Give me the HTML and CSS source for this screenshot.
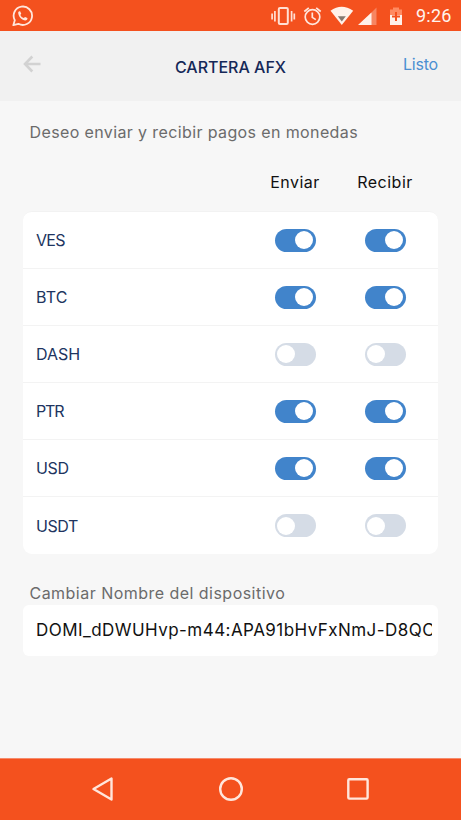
FILE: index.html
```
<!DOCTYPE html>
<html lang="es">
<head>
<meta charset="utf-8">
<meta name="viewport" content="width=device-width, initial-scale=1">
<title>Cartera AFX</title>
<link rel="stylesheet" href="styles.css">
</head>
<body>
<div class="screen">
  <div class="status">
    <svg class="whatsapp" width="22" height="22" viewBox="0 0 22 22" fill="none"><path d="M1.3 20.2 2.8 15.2A9.2 9.2 0 1 1 6.4 18.8Z" stroke="#ffe6dc" stroke-width="1.8" stroke-linejoin="round"/><path d="M6.2 7.3C6.7 6.3 7.5 5.9 8.1 6.3L9.2 8.5C9.3 9 8.5 9.6 8.4 9.9 8.9 11.3 10.2 12.5 11.7 13 12.3 12.8 12.6 11.9 13.1 11.9L15.4 13C15.8 14.3 14.6 15.4 13.3 15.6 10.2 15.6 6 11.4 6.2 7.3Z" fill="#ffe6dc"/></svg>
    <svg class="tray" width="134" height="20" viewBox="0 0 134 20" fill="none">
      <g stroke="#ffe0d4" stroke-width="1.7"><rect x="7.8" y="1.9" width="9" height="16" rx="1.2" stroke-width="2"/><path d="M1.1 7.5v6M3.9 5v10.5M20.6 5v10.5M23.3 7.5v6"/></g>
      <g stroke="#ffe6dc" stroke-width="1.7"><circle cx="41.5" cy="11" r="7.3"/><path d="M33.3 5.5 37.8 1.9M49.7 5.500 45.200 1.900M41.300 6.500v4.900l3.500 2.200"/></g>
      <path d="M59.500 4.800Q70.500-3.300 82.200 4.800L70.800 19Z" fill="#fff1e9"/><path d="M66.800 10.200H74.800L70.800 15.600Z" fill="#85776e"/>
      <path d="M105.500 1.500V19H88Z" fill="#fff" opacity=".3"/><path d="M100.500 6.500V19H87Z" fill="#fff1e9"/>
      <path d="M119 3.500h3V1.500h6v2h3V10h-12Z" fill="#ff8a61"/><path d="M119 9h12v10h-12Z" fill="#fff1e9"/><path d="M125 6v9M121 10.500h8" stroke="#f4511e" stroke-width="2"/>
    </svg>
    <span class="clock">9:26</span>
  </div>
  <header class="header">
    <svg class="back" width="18" height="18" viewBox="0 0 18 18" fill="none" stroke="#d2d2d2" stroke-width="2.600"><path d="M9.300 1.500 2 9l7.300 7.500M2 9h15.500"/></svg>
    <h1 class="title">CARTERA AFX</h1>
    <span class="done">Listo</span>
  </header>
  <main class="content">
    <p class="label intro">Deseo enviar y recibir pagos en monedas</p>
    <div class="columns"><span></span><span class="send">Enviar</span><span class="receive">Recibir</span></div>
    <div class="list">
      <div class="row"><span class="coin ves">VES</span><i class="toggle on"></i><i class="toggle on"></i></div>
      <div class="row"><span class="coin btc">BTC</span><i class="toggle on"></i><i class="toggle on"></i></div>
      <div class="row"><span class="coin dash">DASH</span><i class="toggle"></i><i class="toggle"></i></div>
      <div class="row"><span class="coin ptr">PTR</span><i class="toggle on"></i><i class="toggle on"></i></div>
      <div class="row"><span class="coin usd">USD</span><i class="toggle on"></i><i class="toggle on"></i></div>
      <div class="row"><span class="coin usdt">USDT</span><i class="toggle"></i><i class="toggle"></i></div>
    </div>
    <p class="label device">Cambiar Nombre del dispositivo</p>
    <div class="field"><div class="value">DOMI_dDWUHvp-m44:APA91bHvFxNmJ-D8QC</div></div>
  </main>
  <nav class="nav">
    <svg width="24" height="28" viewBox="0 0 24 28" fill="none" stroke="#ffe6dc" stroke-width="2.400" stroke-linejoin="round"><path d="M20.500 3.500v21L2.500 14Z"/></svg>
    <svg width="26" height="26" viewBox="0 0 26 26" fill="none" stroke="#ffe6dc" stroke-width="2.400"><circle cx="13" cy="13" r="10.800"/></svg>
    <svg width="24" height="24" viewBox="0 0 24 24" fill="none" stroke="#ffe6dc" stroke-width="2.400"><rect x="2.300" y="2.300" width="19.300" height="19.300" rx="1"/></svg>
  </nav>
</div>
</body>
</html>
```
FILE: styles.css
```
* { box-sizing: border-box; }
body { margin: 0; font-family: Inter, "Liberation Sans", sans-serif; font-size: 16px; background: #f7f7f7; }
.screen { width: 461px; height: 820px; display: flex; flex-direction: column; overflow: hidden; }
.status { height: 31px; flex: none; background: #f4511e; display: flex; align-items: center; padding: 1px 9px 0 12px; }
.tray { margin-left: auto; margin-right: 11px; }
.clock { width: 36px; font: 400 18px/31px Roboto, sans-serif; letter-spacing: .2px; color: #fff4ee; white-space: nowrap; margin-top: -1px; }
.header { height: 70px; flex: none; background: #f1f1f1; display: grid; grid-template-columns: 60px 1fr 60px; align-items: center; padding: 0 23px; }
.back { margin-top: -4px; }
.title { margin: 1px 0 0; text-align: center; font-size: 16px; font-weight: 500; line-height: 24px; color: #152858; white-space: nowrap; }
.done { text-align: right; color: #4b8fd1; margin-top: -4px; letter-spacing: -.2px; }
.content { flex: 1; padding: 19px 23px 0; }
.label { margin: 0; padding-left: 6.500px; line-height: 24px; color: #6b6b6b; white-space: nowrap; }
.intro { letter-spacing: .38px; }
.columns { display: grid; grid-template-columns: 1fr 90px 90px; text-align: center; padding-right: 8px; margin-top: 26px; line-height: 24px; letter-spacing: .5px; color: #111; }
.list { margin-top: 17px; height: 343px; background: #fff; border-radius: 9px; display: grid; grid-template-rows: repeat(6, 1fr); overflow: hidden; border-top: 1px solid #f2f2f2; }
.row { display: grid; grid-template-columns: 1fr 90px 90px; align-items: center; justify-items: center; padding: 0 8px 0 13px; border-bottom: 1px solid #f3f3f3; }
.row:last-child { border-bottom: 0; }
.coin { justify-self: start; color: #203460; }
.ves { letter-spacing: -.7px; }
.ptr { letter-spacing: -1.200px; }
.usd { letter-spacing: -.3px; }
.usdt { letter-spacing: -.4px; }
.btc { letter-spacing: .2px; }
.toggle { width: 41px; height: 23px; border-radius: 12px; background: #d5dce6; padding: 2.500px; display: flex; }
.toggle::before { content: ""; width: 18px; height: 18px; border-radius: 50%; background: #fff; }
.toggle.on { background: #4184cb; justify-content: flex-end; }
.device { margin-top: 27px; letter-spacing: .47px; }
.field { height: 51px; background: #fff; border-radius: 6px; padding: 0 6px 0 13px; }
.value { font-size: 17px; line-height: 50px; letter-spacing: .45px; color: #111; white-space: nowrap; overflow: hidden; }
.nav { height: 62px; flex: none; background: #f4511e; border-top: 1px solid #f68b6b; display: flex; align-items: center; justify-content: space-between; padding: 0 91px 1px; }
```
